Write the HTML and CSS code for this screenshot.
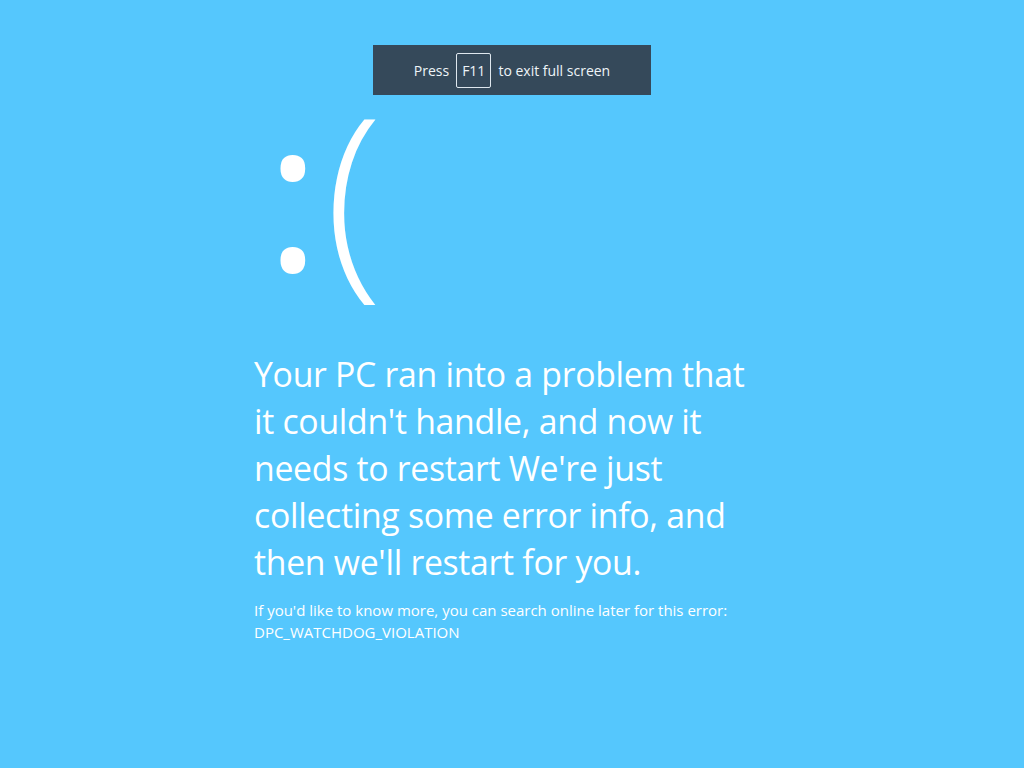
FILE: index.html
```html
<!DOCTYPE html>
<html lang="en">
<head>
  <meta charset="UTF-8">
  <title>Blue Screen</title>
  <link rel="stylesheet" href="styles.css">
</head>
<body>
  <div class="fullscreen-notice">
    Press <span class="key">F11</span> to exit full screen
  </div>

  <div class="screen">
    <div class="face"><span class="eyes">:</span>(</div>

    <p class="message">Your PC ran into a problem that it couldn't handle, and now it needs to restart We're just collecting some error info, and then we'll restart for you.</p>

    <p class="details">
      If you'd like to know more, you can search online later for this error:<br>
      DPC_WATCHDOG_VIOLATION
    </p>
  </div>
</body>
</html>
```

FILE: styles.css
```css
body {
  margin: 0;
  background: #55c7fd;
  color: white;
  font-family: "Open Sans", "Noto Sans", sans-serif;
  height: 768px;
  overflow: hidden;
}

.fullscreen-notice {
  position: absolute;
  top: 45px;
  left: 373px;
  width: 278px;
  height: 50px;
  background: #35495a;
  color: #eef4f8;
  font-size: 14px;
  display: flex;
  align-items: center;
  justify-content: center;
  gap: 7px;
}

.key {
  border: 1px solid #dfe7ee;
  border-radius: 2px;
  padding: 7px 5px;
  line-height: 19px;
}

.screen {
  width: 516px;
  margin: 0 auto;
  padding-top: 64px;
}

.face {
  font-size: 212px;
  font-weight: 300;
  line-height: 250px;
  margin-left: 11px;
}

.eyes {
  font-weight: 500;
  margin-right: 4px;
}

.message {
  width: 505px;
  font-size: 33.8px;
  letter-spacing: -0.3px;
  line-height: 47px;
  margin: 37px 0 0;
}

.details {
  font-size: 15px;
  line-height: 22px;
  margin: 13px 0 0;
}
```
